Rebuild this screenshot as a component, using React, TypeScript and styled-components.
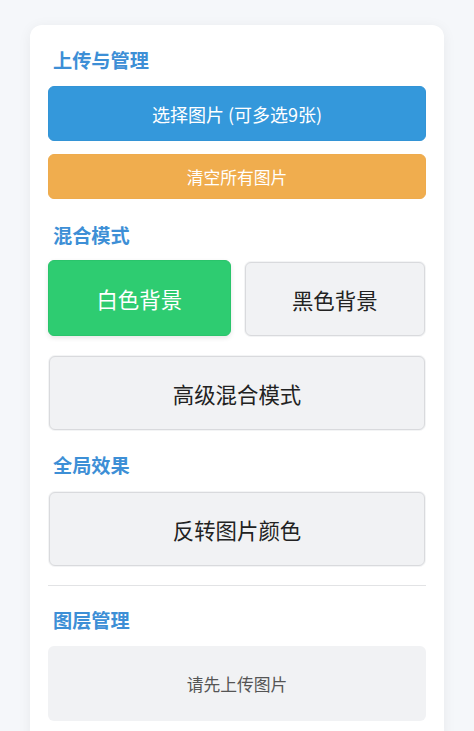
import React from "react";
import styled, { createGlobalStyle, css } from "styled-components";

const GlobalStyle = createGlobalStyle`
  html {
    scrollbar-width: none;
  }
  body {
    margin: 0;
    background: #f5f7fa;
    font-family: "Noto Sans CJK SC", "Noto Sans", sans-serif;
  }
`;

const Page = styled.div`
  padding: 25px 30px 0;
`;

const Card = styled.div`
  background: #ffffff;
  border-radius: 12px;
  box-shadow: 0 2px 14px rgba(0, 0, 0, 0.06);
  padding: 20px 18px 24px;
`;

const Heading = styled.h3<{ $top?: number; $bottom?: number }>`
  margin: ${(p) => p.$top ?? 21}px 0 ${(p) => p.$bottom ?? 11}px;
  padding-left: 5px;
  font-size: 19.2px;
  line-height: 30px;
  font-weight: 700;
  color: #3d8fd6;
`;

type Tone = "blue" | "orange" | "green" | "gray";

const tones = {
  blue: css`
    background: #3498db;
    color: #ffffff;
    border: 1px solid #3394d6;
  `,
  orange: css`
    background: #f0ad4e;
    color: #ffffff;
    border: 1px solid #eeab4d;
  `,
  green: css`
    background: #2ecc71;
    color: #ffffff;
    border: 1px solid #2ac46b;
    transform: translateY(-1px);
    box-shadow: 0 2px 5px rgba(0, 0, 0, 0.1);
  `,
  gray: css`
    background: #f1f2f4;
    color: #222222;
    border: 1px solid #d9dadd;
    box-shadow: 0 0 0 1px #f3f4f5;
    margin: 1px;
    width: calc(100% - 2px);
    height: calc(100% - 2px);
  `,
};

const Button = styled.button<{ $tone: Tone; $height: number; $size: number }>`
  display: flex;
  align-items: center;
  justify-content: center;
  box-sizing: border-box;
  width: 100%;
  height: ${(p) => p.$height}px;
  border-radius: 6px;
  font-family: inherit;
  font-size: ${(p) => p.$size}px;
  cursor: pointer;
  ${(p) => tones[p.$tone]}
`;

const Stack = styled.div`
  display: flex;
  flex-direction: column;
  gap: 13px;
`;

const ModeGrid = styled.div`
  display: grid;
  grid-template-columns: 1fr 1fr;
  grid-auto-rows: 76px;
  gap: 18px 13px;
`;

const Cell = styled.div<{ $span?: boolean }>`
  grid-column: ${(p) => (p.$span ? "1 / -1" : "auto")};
  display: flex;
`;

const SingleCell = styled.div`
  height: 76px;
  display: flex;
`;

const Divider = styled.hr`
  border: none;
  border-top: 1px solid #e2e3e5;
  margin: 18px 0 19px;
`;

const Placeholder = styled.div`
  display: flex;
  align-items: center;
  justify-content: center;
  height: 75px;
  margin-top: 2px;
  background: #f1f2f4;
  border-radius: 6px;
  font-size: 16.8px;
  color: #555555;
`;

export default function App() {
  return (
    <>
      <GlobalStyle />
      <Page>
        <Card>
          <Heading $top={0}>上传与管理</Heading>
          <Stack>
            <Button $tone="blue" $height={55} $size={18}>
              选择图片 (可多选9张)
            </Button>
            <Button $tone="orange" $height={45} $size={16.8}>
              清空所有图片
            </Button>
          </Stack>

          <Heading $top={21}>混合模式</Heading>
          <ModeGrid>
            <Cell>
              <Button $tone="green" $height={76} $size={21.4}>
                白色背景
              </Button>
            </Cell>
            <Cell>
              <Button $tone="gray" $height={76} $size={21.4}>
                黑色背景
              </Button>
            </Cell>
            <Cell $span>
              <Button $tone="gray" $height={76} $size={21.4}>
                高级混合模式
              </Button>
            </Cell>
          </ModeGrid>

          <Heading $top={19}>全局效果</Heading>
          <SingleCell>
            <Button $tone="gray" $height={76} $size={21.4}>
              反转图片颜色
            </Button>
          </SingleCell>

          <Divider />

          <Heading $top={0}>图层管理</Heading>
          <Placeholder>请先上传图片</Placeholder>
        </Card>
      </Page>
    </>
  );
}
